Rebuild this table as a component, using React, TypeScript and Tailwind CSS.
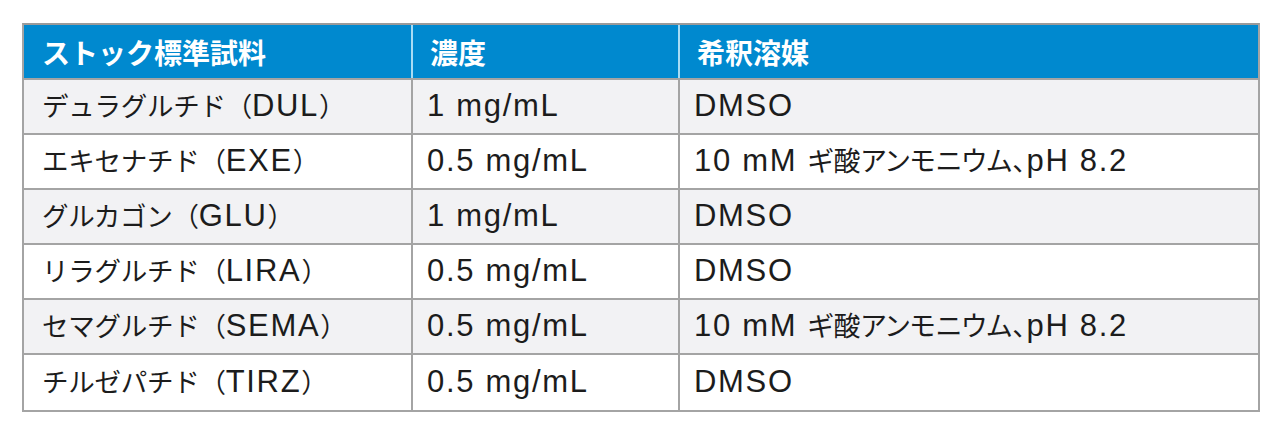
import React from "react";

const CJK = /([\u3000-\u30ff\u4e00-\u9fff\uff00-\uffef]+)/;

function Mixed({ text, tight = false }: { text: string; tight?: boolean }) {
  const parts = text.split(CJK).filter((p) => p.length > 0);
  return (
    <span className="whitespace-pre">
      {parts.map((p, i) =>
        CJK.test(p) ? (
          <span
            key={i}
            className={
              tight
                ? "text-[27px] tracking-[0.02em] [font-feature-settings:'palt']"
                : "text-[26.5px] tracking-[-0.01em]"
            }
            style={{ fontFamily: '"Noto Sans CJK JP", sans-serif' }}
          >
            {p}
          </span>
        ) : (
          <span key={i} className="text-[31px] tracking-[0.055em]">
            {p}
          </span>
        )
      )}
    </span>
  );
}

const rows = [
  ["デュラグルチド（DUL）", "1 mg/mL", "DMSO"],
  ["エキセナチド（EXE）", "0.5 mg/mL", "10 mM ギ酸アンモニウム、pH 8.2"],
  ["グルカゴン（GLU）", "1 mg/mL", "DMSO"],
  ["リラグルチド（LIRA）", "0.5 mg/mL", "DMSO"],
  ["セマグルチド（SEMA）", "0.5 mg/mL", "10 mM ギ酸アンモニウム、pH 8.2"],
  ["チルゼパチド（TIRZ）", "0.5 mg/mL", "DMSO"],
];

export default function App() {
  return (
    <div className="w-[1280px] h-[437px] bg-white pt-[23px] pl-[22px]" style={{ fontFamily: '"Liberation Sans", "Noto Sans CJK JP", sans-serif' }}>
      <div className="w-[1238px] border-2 border-[#a4a4a4] border-t-[#9a9a9a]">
        <div className="grid grid-cols-[389px_267px_1fr] h-[55px] bg-[#0089cf] border-b-2 border-[#a4a4a4] text-white">
          <div className="flex items-center pl-[18px] border-r-2 border-[#a9dcf4] text-[28px] font-bold" style={{ fontFamily: '"Noto Sans CJK JP", sans-serif' }}>
            ストック標準試料
          </div>
          <div className="flex items-center pl-[17px] border-r-2 border-[#a9dcf4] text-[28px] font-bold" style={{ fontFamily: '"Noto Sans CJK JP", sans-serif' }}>
            濃度
          </div>
          <div className="flex items-center pl-[17px] text-[28px] font-bold" style={{ fontFamily: '"Noto Sans CJK JP", sans-serif' }}>
            希釈溶媒
          </div>
        </div>
        {rows.map((r, i) => (
          <div
            key={i}
            className={
              "grid grid-cols-[389px_267px_1fr] h-[55px] text-[#1c1c1c] " +
              (i % 2 === 0 ? "bg-[#f2f2f4] " : "bg-white ") +
              (i < rows.length - 1 ? "border-b-2 border-[#a4a4a4]" : "")
            }
          >
            <div className="flex items-center pl-[18px] border-r-2 border-[#a4a4a4]">
              <Mixed text={r[0]} />
            </div>
            <div className="flex items-center pl-[14px] border-r-2 border-[#a4a4a4]">
              <Mixed text={r[1]} />
            </div>
            <div className="flex items-center pl-[14px]">
              <Mixed text={r[2]} tight />
            </div>
          </div>
        ))}
      </div>
    </div>
  );
}
